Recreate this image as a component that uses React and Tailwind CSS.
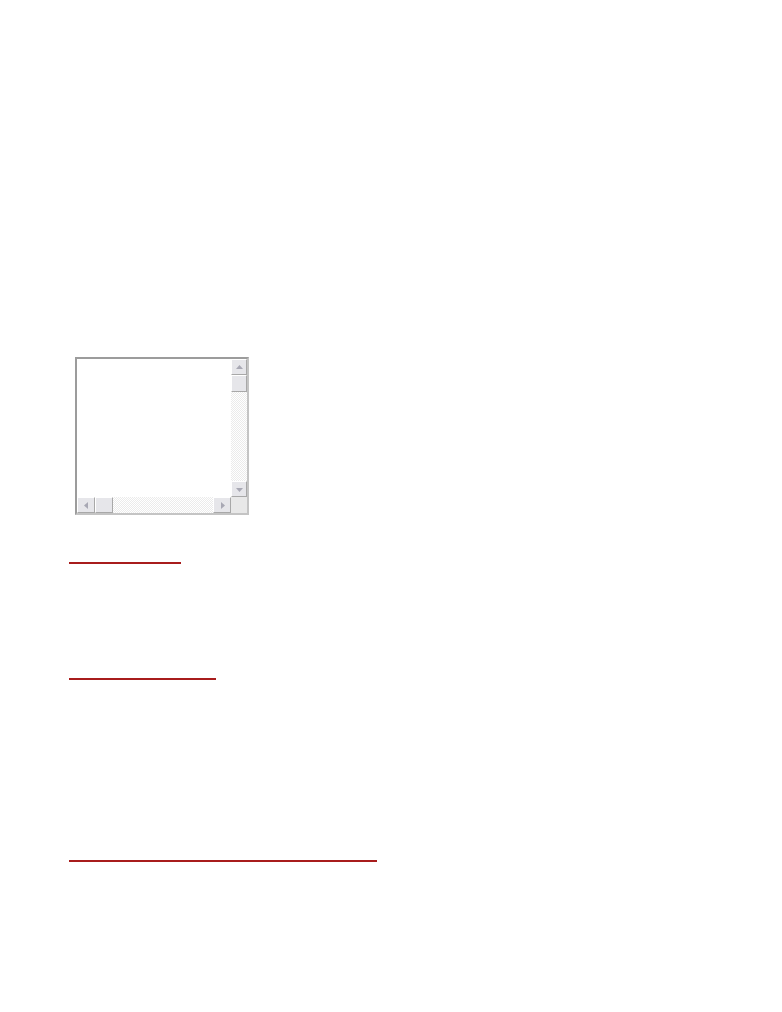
const Arrow = ({ dir }) => {
  const pts = {
    up: "1,6 4.5,2 8,6",
    down: "1,3 4.5,7 8,3",
    left: "6,1 2,4.5 6,8",
    right: "3,1 7,4.5 3,8",
  };
  return (
    <svg width="9" height="9" viewBox="0 0 9 9">
      <polygon points={pts[dir]} fill="#a8a8b4" />
    </svg>
  );
};

const Btn = ({ className, children }) => (
  <div
    className={`flex items-center justify-center bg-[#e6e6ea] border border-t-white border-l-white border-r-[#a8a8a8] border-b-[#a8a8a8] ${className}`}
  >
    {children}
  </div>
);

const track =
  "bg-[repeating-conic-gradient(#ebebeb_0_25%,#ffffff_0_50%)] bg-[length:2px_2px]";

const ScrollBox = () => (
  <div className="ml-[6px] w-[174px] h-[158px] border-2 border-t-[#9c9c9c] border-l-[#9c9c9c] border-r-[#c4c4c4] border-b-[#c4c4c4] flex flex-col">
    <div className="flex flex-1">
      <div className="flex-1 bg-white" />
      <div className="w-4 flex flex-col">
        <Btn className="h-4">
          <Arrow dir="up" />
        </Btn>
        <Btn className="h-[17px]" />
        <div className={`flex-1 ${track}`} />
        <Btn className="h-4">
          <Arrow dir="down" />
        </Btn>
      </div>
    </div>
    <div className="flex h-4">
      <Btn className="w-[18px]">
        <Arrow dir="left" />
      </Btn>
      <Btn className="w-[18px]" />
      <div className={`flex-1 ${track}`} />
      <Btn className="w-[18px]">
        <Arrow dir="right" />
      </Btn>
      <div className="w-4 bg-[#e8e8e8]" />
    </div>
  </div>
);

const Rule = ({ width, className }) => (
  <div className={`h-[2px] bg-[#a81c1c] ${width} ${className}`} />
);

export default function App() {
  return (
    <div className="min-h-[1012px] bg-white pl-[69px] pt-[357px] font-['Liberation_Sans',sans-serif]">
      <ScrollBox />
      <Rule width="w-[112px]" className="mt-[47px]" />
      <Rule width="w-[147px]" className="mt-[114px]" />
      <Rule width="w-[308px]" className="mt-[180px]" />
    </div>
  );
}
